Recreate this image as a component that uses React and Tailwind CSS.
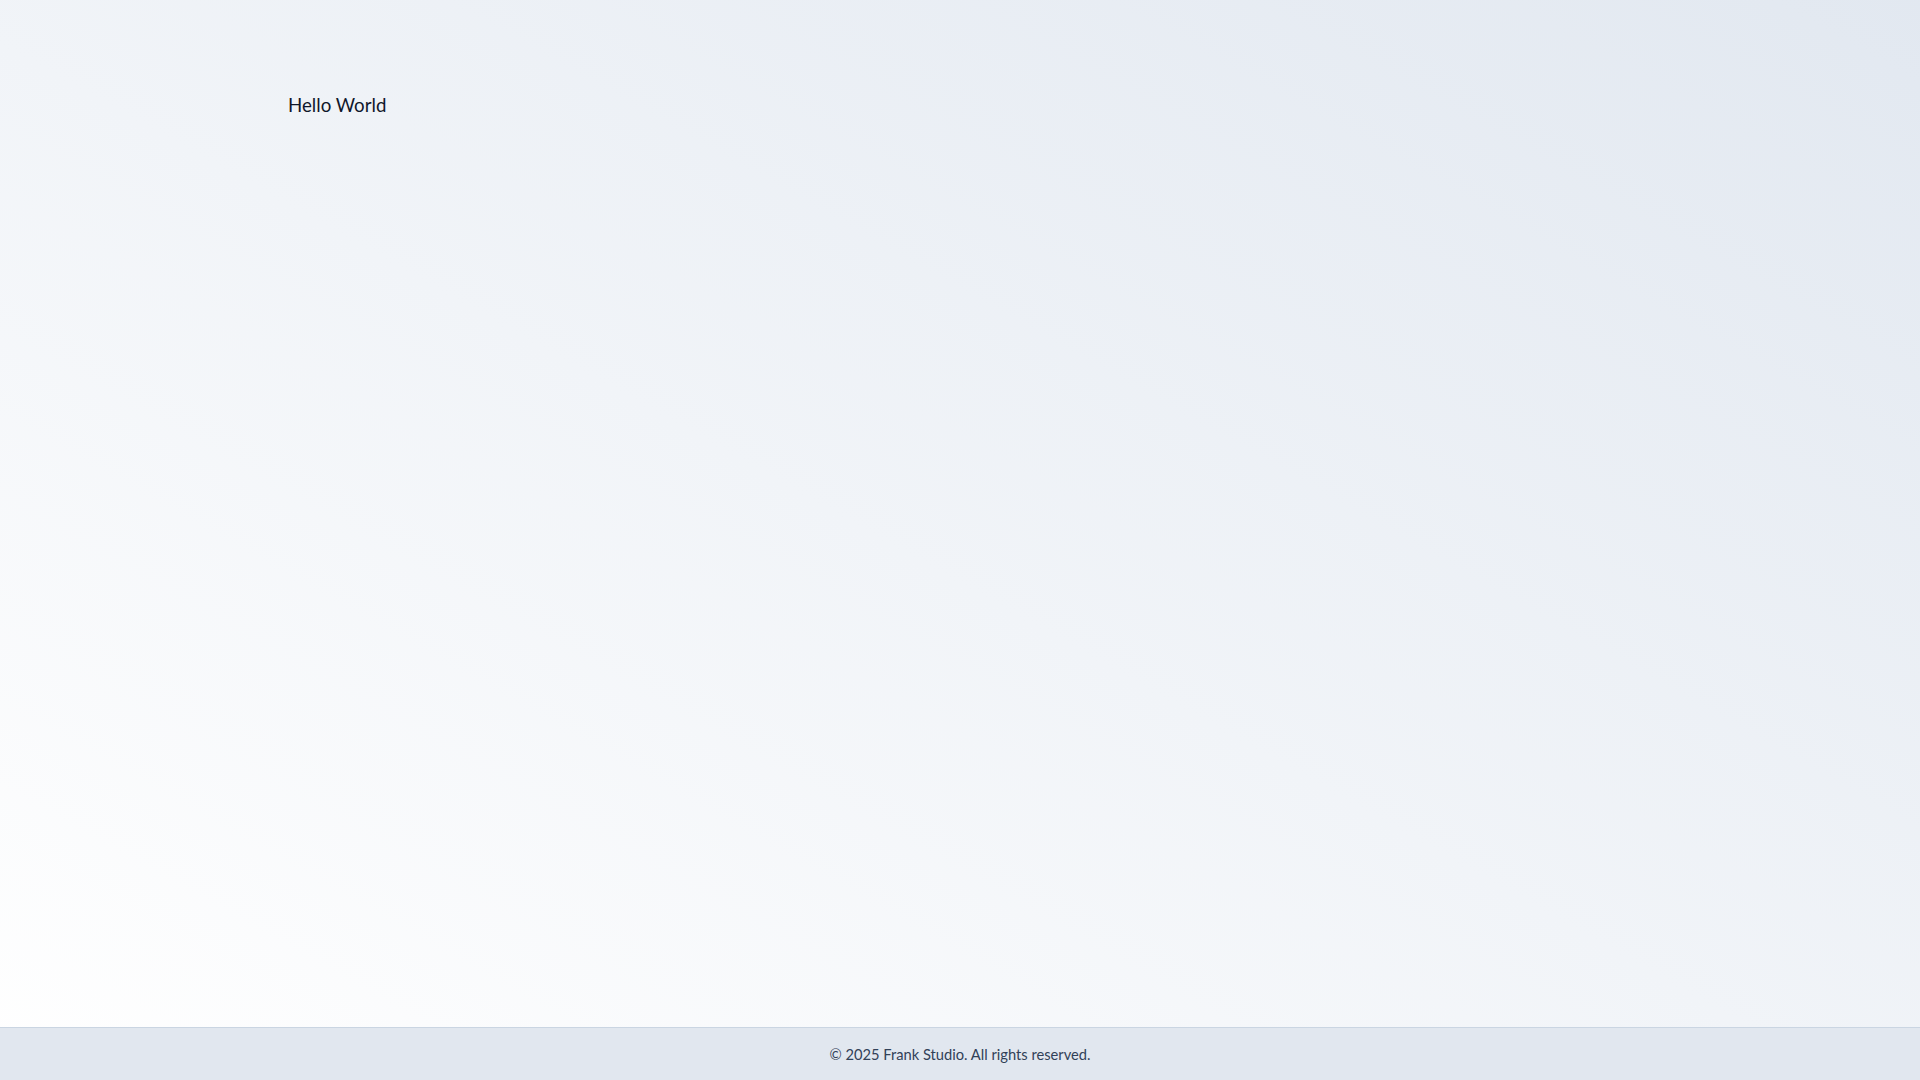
export default function App() {
  return (
    <div className="flex h-screen flex-col bg-linear-to-tr from-white to-slate-200 font-['Lato','Noto_Sans',sans-serif]">
      <main className="flex-1 pl-[288px] pt-[91px]">
        <p className="text-[18.7px] leading-7 text-slate-900">Hello World</p>
      </main>
      <footer className="h-[53px] shrink-0 border-t border-slate-300 bg-[#e1e7ef] flex items-center justify-center">
        <p className="text-[14.7px] text-slate-700">© 2025 Frank Studio. All rights reserved.</p>
      </footer>
    </div>
  );
}
